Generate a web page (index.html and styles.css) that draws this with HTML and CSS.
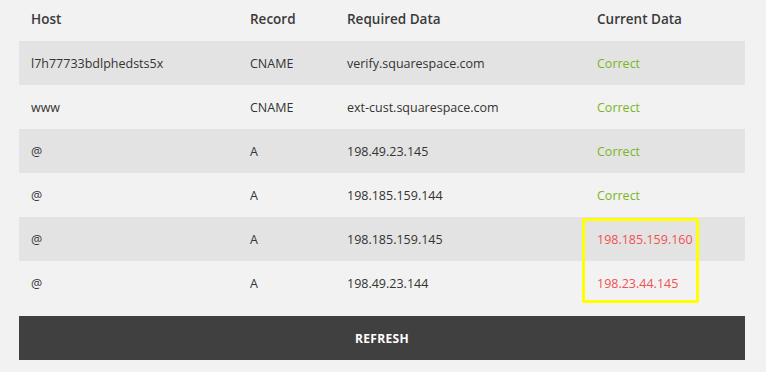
FILE: index.html
```html
<!DOCTYPE html>
<html>
<head>
<meta charset="utf-8">
<link rel="stylesheet" href="styles.css">
</head>
<body>
<div class="panel">
  <div class="grid head">
    <div class="cell">Host</div>
    <div class="cell">Record</div>
    <div class="cell">Required Data</div>
    <div class="cell">Current Data</div>
  </div>
  <div class="rows">
    <div class="grid row shade">
      <div class="cell">l7h77733bdlphedsts5x</div>
      <div class="cell">CNAME</div>
      <div class="cell">verify.squarespace.com</div>
      <div class="cell ok">Correct</div>
    </div>
    <div class="grid row">
      <div class="cell">www</div>
      <div class="cell">CNAME</div>
      <div class="cell">ext-cust.squarespace.com</div>
      <div class="cell ok">Correct</div>
    </div>
    <div class="grid row shade">
      <div class="cell">@</div>
      <div class="cell">A</div>
      <div class="cell">198.49.23.145</div>
      <div class="cell ok">Correct</div>
    </div>
    <div class="grid row">
      <div class="cell">@</div>
      <div class="cell">A</div>
      <div class="cell">198.185.159.144</div>
      <div class="cell ok">Correct</div>
    </div>
    <div class="grid row shade">
      <div class="cell">@</div>
      <div class="cell">A</div>
      <div class="cell">198.185.159.145</div>
      <div class="cell bad">198.185.159.160</div>
    </div>
    <div class="grid row">
      <div class="cell">@</div>
      <div class="cell">A</div>
      <div class="cell">198.49.23.144</div>
      <div class="cell bad">198.23.44.145</div>
    </div>
    <div class="highlight"></div>
  </div>
  <button class="refresh">REFRESH</button>
</div>
</body>
</html>
```
FILE: styles.css
```css
html, body {
  margin: 0;
  padding: 0;
  background: #f2f2f2;
}
body {
  font-family: "Open Sans", "DejaVu Sans", sans-serif;
  color: #333333;
  width: 766px;
  height: 372px;
  overflow: hidden;
}
.panel {
  padding: 0 21px 0 19px;
}
.grid {
  display: grid;
  grid-template-columns: 231px 97px 250px 148px;
  align-items: center;
}
.cell {
  white-space: nowrap;
}
.cell:first-child {
  padding-left: 12px;
}
.head {
  height: 41px;
  font-size: 13.5px;
  font-weight: 600;
  color: #3a3a3a;
  padding-bottom: 4px;
  box-sizing: border-box;
}
.rows {
  position: relative;
}
.row {
  height: 44px;
  font-size: 12.5px;
  background: #f2f2f2;
}
.row.shade {
  background: #e3e3e3;
}
.row .cell:nth-child(2) {
  font-weight: 500;
}
.ok {
  color: #7cb51e;
}
.bad {
  color: #f25050;
}
.highlight {
  position: absolute;
  left: 563px;
  top: 177px;
  width: 111px;
  height: 79px;
  border: 3px solid #ffff00;
  border-radius: 2px;
}
.refresh {
  display: block;
  width: 100%;
  height: 44px;
  margin-top: 11px;
  border: 0;
  background: #404040;
  color: #ffffff;
  font-family: "Open Sans", "DejaVu Sans", sans-serif;
  font-weight: 700;
  font-size: 12px;
  letter-spacing: 0.3px;
  cursor: pointer;
}
```
